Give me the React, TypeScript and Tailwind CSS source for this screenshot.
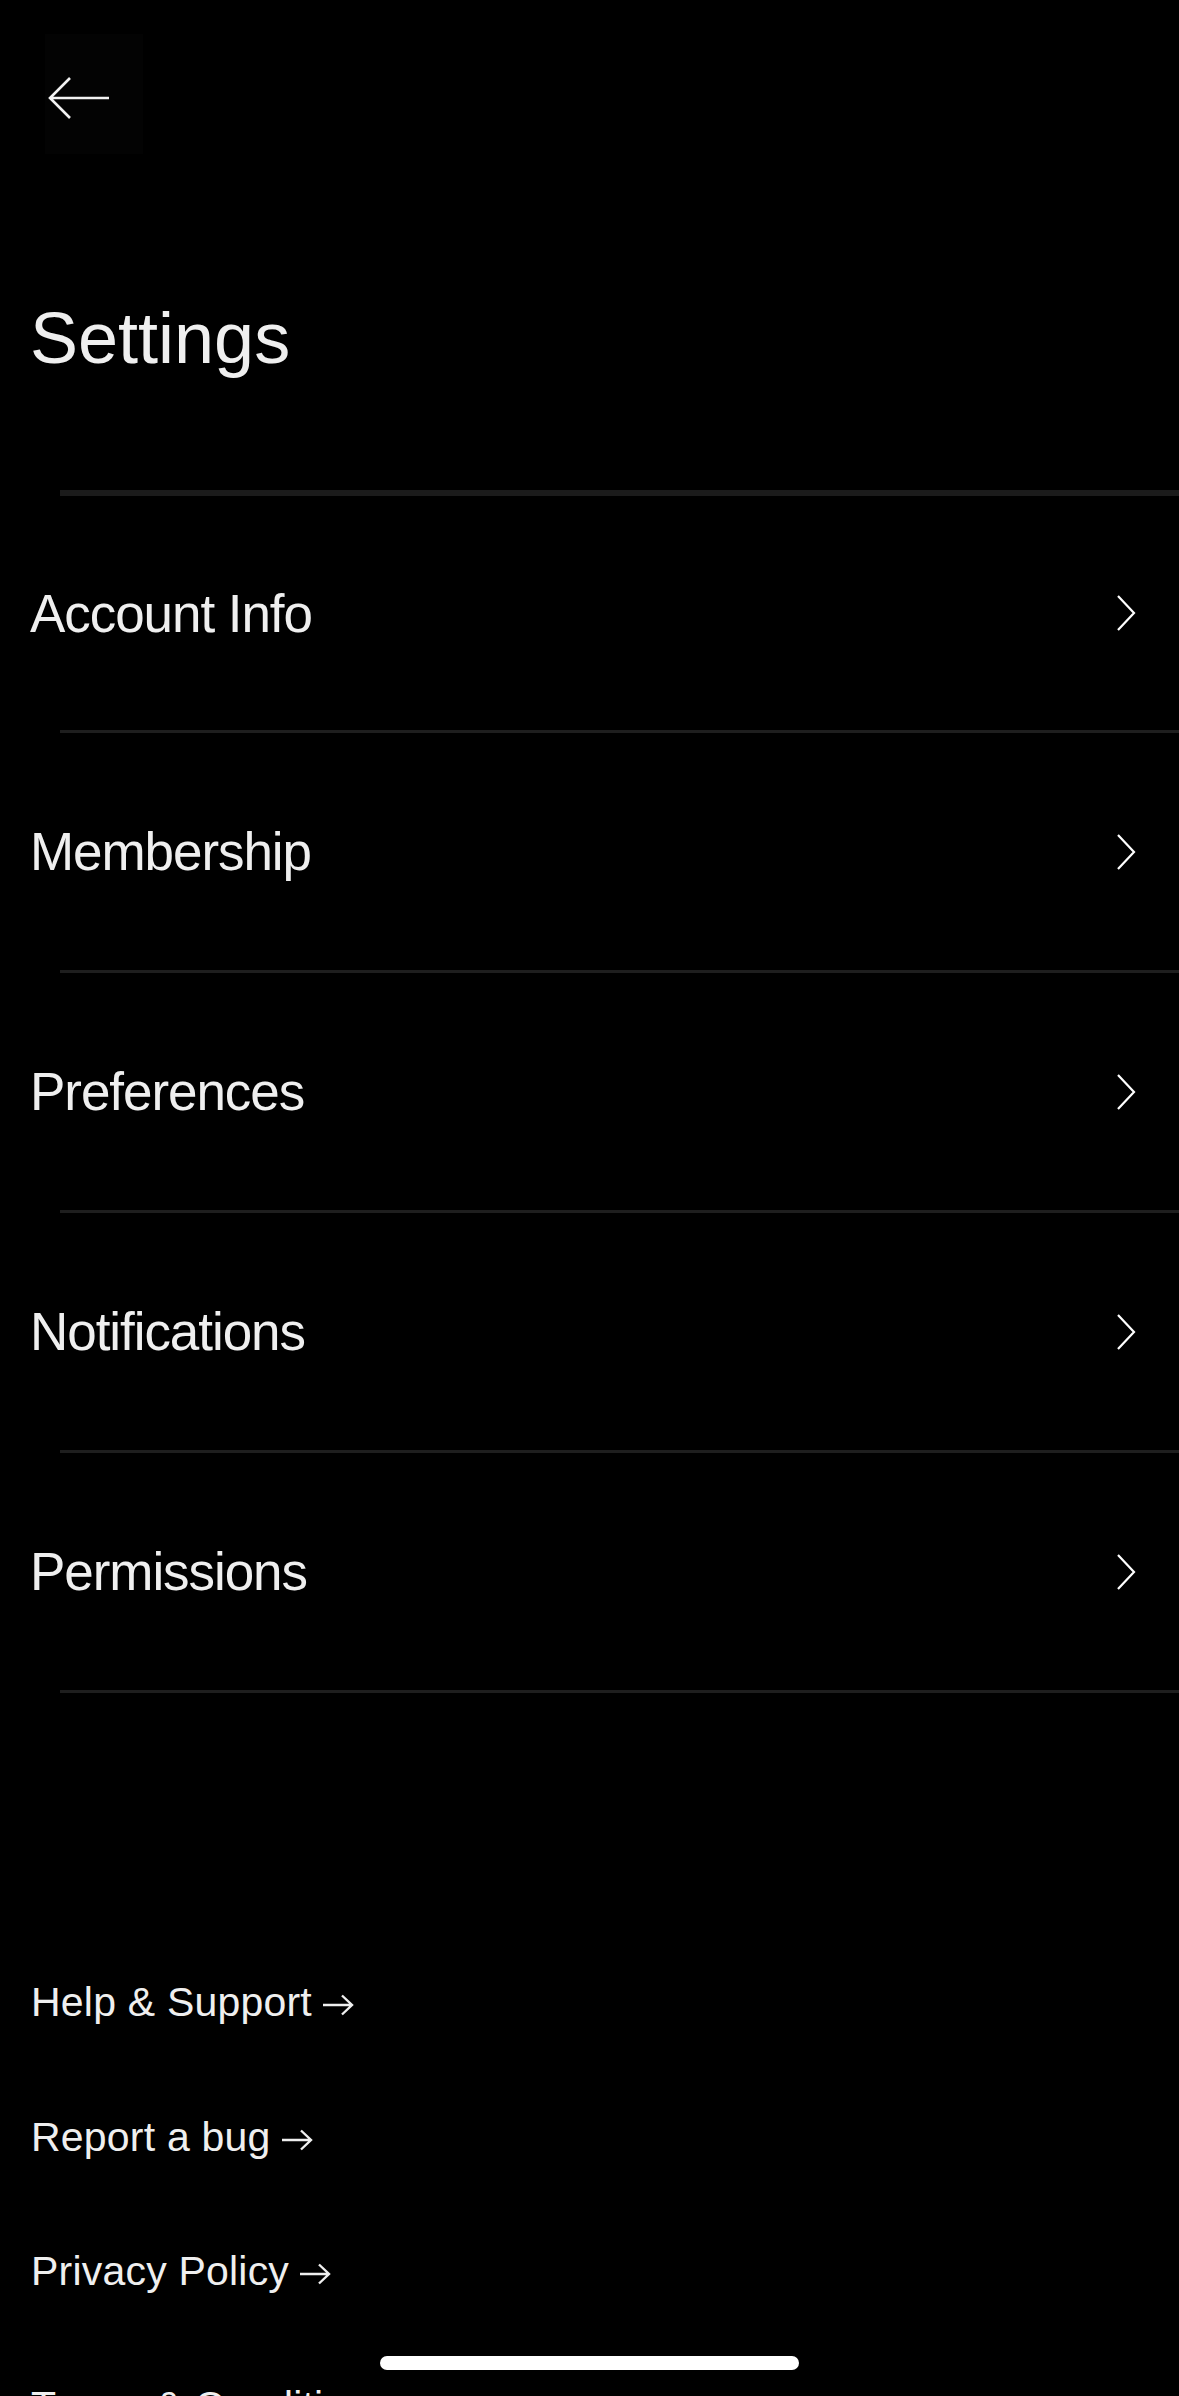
import React from 'react'

const rows = ['Account Info', 'Membership', 'Preferences', 'Notifications', 'Permissions']

const links = ['Help & Support', 'Report a bug', 'Privacy Policy', 'Terms & Conditions']

// thin chevron on the right of each settings row
const Chevron = () => (
  <svg width="20" height="38" viewBox="0 0 20 38" fill="none">
    <path d="M2 2 L18 19 L2 36" stroke="#ffffff" strokeWidth="2.2" strokeLinejoin="miter" />
  </svg>
)

const LinkArrow = () => (
  <svg width="32" height="22" viewBox="0 0 32 22" fill="none" className="mt-[16px] ml-[10px] shrink-0">
    <path d="M1 11 H30 M20 1.5 L30 11 L20 20.5" stroke="#efefef" strokeWidth="2.4" />
  </svg>
)

export default function App() {
  return (
    <div className="relative w-[1179px] h-[2396px] overflow-hidden bg-black text-[#efefef] font-['Liberation_Sans',Arial,sans-serif]">
      {/* Back button */}
      <div className="pt-[34px] pl-[45px]">
        <div className="w-[98px] h-[120px] bg-[#030303]">
          <svg width="62" height="44" viewBox="0 0 62 44" fill="none" className="ml-[2px] translate-y-[42px]">
            <path d="M62 22 H3 M23 2 L3 22 L23 42" stroke="#f2f2f2" strokeWidth="2.6" />
          </svg>
        </div>
      </div>

      {/* Title */}
      <h1 className="mt-[148px] pl-[30px] text-[72px] leading-none">Settings</h1>

      {/* Settings list */}
      <div className="mt-[116px]">
        <div className="ml-[60px] h-[6px] bg-[#1b1b1b]" />
        {rows.map((label, i) => (
          <div key={label}>
            <div
              className={`flex items-center justify-between pl-[30px] pr-[43px] ${i === 0 ? 'h-[234px]' : 'h-[237px]'}`}
            >
              <span className="text-[53px] leading-none tracking-[-0.02em]">{label}</span>
              <Chevron />
            </div>
            <div className="ml-[60px] h-[3px] bg-[#1e1e1e]" />
          </div>
        ))}
      </div>

      {/* Footer links */}
      <div className="mt-[285px] pl-[31px] flex flex-col gap-[86.5px]">
        {links.map((label) => (
          <div key={label} className="flex items-start h-[48px]">
            <span className="text-[41px] leading-[48px] tracking-[0.005em]">{label}</span>
            <LinkArrow />
          </div>
        ))}
      </div>

      {/* Home indicator */}
      <div className="absolute left-[380px] top-[2356px] w-[419px] h-[14px] rounded-full bg-white" />
    </div>
  )
}
